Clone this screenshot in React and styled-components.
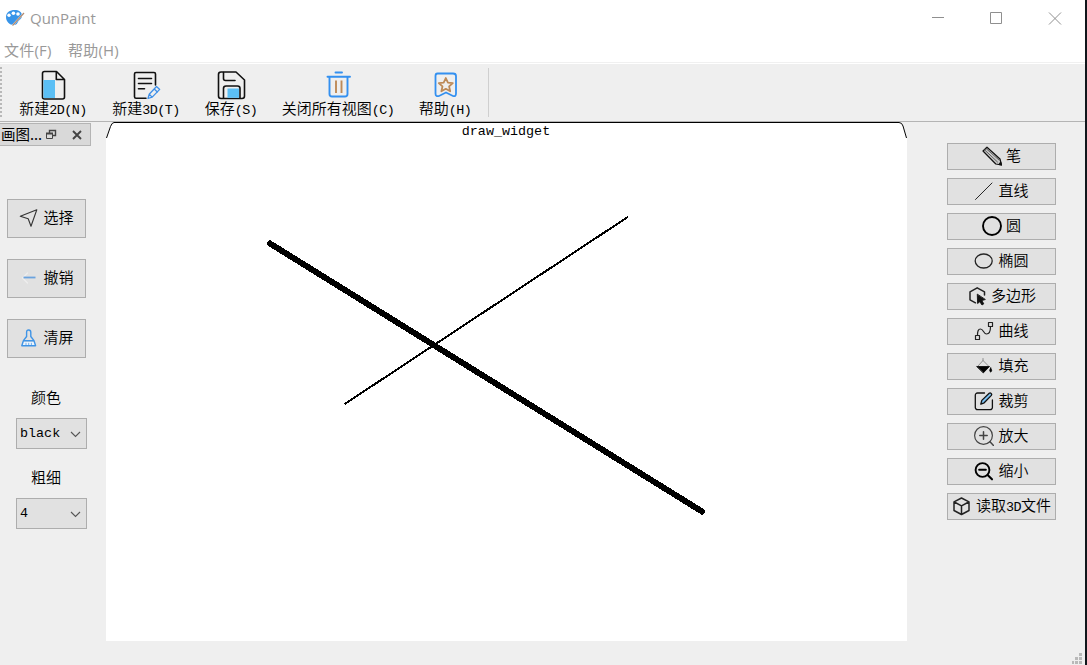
import React from 'react';
import styled, { createGlobalStyle } from 'styled-components';

const Global = createGlobalStyle`
  * { box-sizing: border-box; }
  html, body { margin: 0; padding: 0; overflow: hidden; }
`;

const Desktop = styled.div`
  display: flex;
  width: 1087px;
  height: 665px;
  background: #10161b;
  font-family: 'Liberation Mono', 'Noto Sans CJK SC', monospace;
  font-size: 15px;
  font-weight: 350;
  color: #000;
`;

const Window = styled.div`
  position: relative;
  display: flex;
  flex-direction: column;
  width: 1085px;
  height: 665px;
  background: #efefef;
`;

const TitleBar = styled.header`
  display: flex;
  align-items: center;
  height: 37px;
  padding: 0 23px 0 5px;
  background: #fff;
`;

const Title = styled.span`
  flex: 1;
  margin: -2px 0 0 5px;
  font: 15px/20px 'Open Sans', sans-serif;
  color: #999;
`;

const Controls = styled.div`
  display: flex;
  gap: 45px;
`;

const MenuBar = styled.nav`
  display: flex;
  gap: 16px;
  height: 25px;
  padding: 3px 4px 0;
  background: #fff;
`;

const MenuItem = styled.span`
  width: ${(p) => p.$width}px;
  font: 15px/20px 'Open Sans', 'Noto Sans CJK SC', sans-serif;
  letter-spacing: 0.2px;
  color: #999;
  white-space: nowrap;
`;

const ToolBar = styled.div`
  display: flex;
  height: 60px;
  border-top: 1px solid #f0f0f0;
  border-bottom: 1px solid #b4b4b4;
  box-shadow: inset 0 1px #fff;
`;

const Handle = styled.div`
  width: 2px;
  height: 50px;
  margin: 4px 4px 0 0;
  background: repeating-linear-gradient(#b8b8b8 0 2px, #efefef 2px 4px);
`;

const ToolItem = styled.div`
  display: flex;
  flex-direction: column;
  align-items: center;
  width: ${(p) => p.$width}px;
  padding: 6px 0 0 1px;
`;

const ToolLabel = styled.div`
  height: 20px;
  line-height: 20px;
  white-space: nowrap;
`;

const Separator = styled.div`
  width: 1px;
  height: 49px;
  margin: 5px 0 0 5px;
  background: #cfcfcf;
`;

const Latin = styled.span`
  font-size: 13.4px;
  letter-spacing: ${(p) => p.$tracking ?? -0.5}px;
`;

const Body = styled.main`
  display: flex;
  flex: 1;
`;

const Dock = styled.aside`
  display: flex;
  flex-direction: column;
  width: 106px;
  padding-top: 1px;
`;

const DockTitle = styled.div`
  display: flex;
  align-items: center;
  width: 91px;
  height: 23px;
  padding-left: 1px;
  border: 1px solid #b4b4b4;
  border-left: 0;
  background: #d9d9d9;
  font: 14.5px/20px 'Noto Sans CJK SC', sans-serif;
`;

const DockName = styled.span`
  width: 44px;
  margin-top: -1px;
  white-space: nowrap;
`;

const ActionList = styled.div`
  display: flex;
  flex-direction: column;
  gap: 21px;
  margin: 53px 0 0 7px;
`;

const Button = styled.button`
  display: flex;
  align-items: center;
  justify-content: center;
  gap: 4px;
  width: ${(p) => p.$width}px;
  height: ${(p) => p.$height}px;
  padding: 0;
  border: 1px solid #adadad;
  background: #e1e1e1;
  color: #000;
  font: inherit;
  line-height: 20px;
  white-space: nowrap;

  svg { flex: none; margin-bottom: 1px; }
  span { margin-top: 2px; }
`;

const Field = styled.label`
  display: flex;
  flex-direction: column;
  gap: 8px;
  margin: ${(p) => p.$top}px 0 0 16px;
  line-height: 20px;
`;

const FieldName = styled.span`
  padding-left: 15px;
`;

const Combo = styled.div`
  display: flex;
  align-items: center;
  justify-content: space-between;
  width: 71px;
  height: 31px;
  padding: 1px 5px 0 3px;
  border: 1px solid #adadad;
  background: #e1e1e1;
`;

const Canvas = styled.section`
  position: relative;
  width: 801px;
  height: 519px;
  background: #fff;
`;

const Drawing = styled.svg`
  display: block;
`;

const CanvasTitle = styled.div`
  position: absolute;
  top: 0;
  left: 0;
  width: 800px;
  line-height: 20px;
  text-align: center;
`;

const Palette = styled.aside`
  display: flex;
  flex-direction: column;
  gap: 8px;
  padding: 21px 0 0 40px;
`;

const Grip = styled.svg`
  position: absolute;
  right: 3px;
  bottom: 1px;
`;

function Mixed({ children }) {
  return children
    .split(/([\x20-\x7e]+)/)
    .filter(Boolean)
    .map((s, i) => (/^[\x20-\x7e]/.test(s) ? <Latin key={i}>{s}</Latin> : <React.Fragment key={i}>{s}</React.Fragment>));
}

const Icon = ({ size = 20, box = 20, stroke = '#111', sw = 1.3, children }) => (
  <svg width={size} height={size} viewBox={`0 0 ${box} ${box}`} fill="none" stroke={stroke} strokeWidth={sw} strokeLinecap="round" strokeLinejoin="round">
    {children}
  </svg>
);

const Logo = () => (
  <svg width="20" height="20" viewBox="0 0 20 20">
    <path d="M1 8C1 3.500 5 1 9.500 1s7.500 2 7.500 5.500c0 3-1.500 3.500-3 5s-1.500 4.500-5 4.500C4.500 16 1 12.500 1 8z" fill="#3894e8" />
    <circle cx="4" cy="6.300" r="1.700" fill="#fff" />
    <circle cx="8.400" cy="4.300" r="1.800" fill="#fff" />
    <circle cx="13" cy="5" r="1.800" fill="#fff" />
    <path d="M19 4 7.500 16.500" stroke="#fff" strokeWidth="1.800" />
    <path d="M19 4 7.500 16.500" stroke="#b08a70" strokeWidth="1.200" />
  </svg>
);

const tools = [
  { label: '新建2D(N)', width: 93, icon: (
    <Icon size={32} box={32} sw={1.6}>
      <path d="M7.500 2.500h12l8 8V28a2 2 0 0 1-2 2h-18a2 2 0 0 1-2-2V4.500a2 2 0 0 1 2-2zM19.300 3v7.500h8" />
      <path d="M6.500 11h11.500v18H6.500z" fill="#5bbff5" stroke="none" />
    </Icon>
  ) },
  { label: '新建3D(T)', width: 93, icon: (
    <Icon size={32} box={32} sw={1.6}>
      <path d="M16 29.300H6a1.500 1.500 0 0 1-1.500-1.500V5A1.500 1.500 0 0 1 6 3.500h18A1.500 1.500 0 0 1 25.500 5v11" />
      <path d="M8.500 9.500h13M8.500 14.500h13M8.500 19.700h6" />
      <path d="m18 29.500 1.200-4.300 7.300-7.700 3.200 2.900-7.500 7.700zM24.200 20l3.200 3M19.200 25.200l3 2.900" stroke="#3d8fe8" strokeWidth="1.300" />
    </Icon>
  ) },
  { label: '保存(S)', width: 77, icon: (
    <Icon size={32} box={32} sw={1.6}>
      <path d="M6.500 3H21l8.500 8V27a2.500 2.500 0 0 1-2.500 2.500H6A2.500 2.500 0 0 1 3.500 27V5.500A2.500 2.500 0 0 1 6 3z" />
      <path d="M8.500 3.500v6q0 2 2 2H20M8.500 29V19.500q0-2.500 2.500-2.500h11.500q2.500 0 2.500 2.500v9.500" />
      <path d="M12.500 19.500h11.500V28.800H12.500z" fill="#5bbff5" stroke="none" />
    </Icon>
  ) },
  { label: '关闭所有视图(C)', width: 137, icon: (
    <Icon size={32} box={32} stroke="#3390f0" sw={1.9}>
      <path d="M13.500 3.500H20M5.500 7.800H28M7.500 8v17q0 2.500 2.500 2.500h13q2.500 0 2.500-2.500V8" />
      <path d="M14 11.500v12.500M19.500 11.500v12.500" stroke="#bd8a58" strokeLinecap="butt" />
    </Icon>
  ) },
  { label: '帮助(H)', width: 77, icon: (
    <Icon size={32} box={32} stroke="#3390f0" sw={1.8}>
      <path d="M8.500 4.500h15.500Q27 4.500 27 7v17.500q0 3.500-3 2.500l-7-3.500-7 3.500q-3.500 1-3.500-2.500V7q0-2.500 2-2.500z" />
      <path d="m16.800 9 2.100 4.600 4.900.5-3.700 3.300 1.100 4.900-4.400-2.500-4.400 2.500 1.100-4.900-3.700-3.300 4.900-.5z" stroke="#bd8a58" strokeWidth="1.800" />
    </Icon>
  ) },
];

const actions = [
  { label: '选择', icon: <Icon sw={1.1} stroke="#333"><path d="M1.300 8.300 17.800 1.800 12 18.300 9.200 10.800z" /></Icon> },
  { label: '撤销', icon: (
    <Icon><path d="M8.500 5 3.500 10l5 5" stroke="#eeeeee" /><path d="M4.500 9.500h12" stroke="#6aa3de" strokeWidth="1.800" strokeLinecap="butt" /></Icon>
  ) },
  { label: '清屏', icon: (
    <Icon stroke="#3f94e6" sw={1.4}>
      <path d="M4 14h11.500l1 3.500H3z" fill="#eef5fc" stroke="none" />
      <path d="M7.600 8.500V4.500Q7.600 2 9.700 2t2.100 2.500v4l3.200 4.200 1.600 5H2.800l1.600-5zM5 12.700h9.500" />
      <path d="M7 15.200v1.500M9.700 15.200v1.500M12.400 15.200v1.500" strokeWidth=".7" />
    </Icon>
  ) },
];

const shapes = [
  { label: '笔', icon: (
    <Icon sw={1.2}>
      <path d="M1 5 5 1.200 18 13 19.500 19 13.800 18z" fill="#c9c9c9" />
      <path d="M2.500 3.800 15.500 16M4 2.500 17 14" strokeWidth=".8" stroke="#444" />
      <path d="m17 18.500 2.500.5-.8-2.900z" fill="#111" />
    </Icon>
  ) },
  { label: '直线', icon: <Icon sw={0.9}><path d="M1.500 18.500 18 2" /></Icon> },
  { label: '圆', icon: <Icon sw={1.9} stroke="#000"><circle cx="10" cy="10" r="9" /></Icon> },
  { label: '椭圆', icon: <Icon sw={1.3} stroke="#222"><ellipse cx="9.700" cy="10" rx="8.500" ry="7" /></Icon> },
  { label: '多边形', icon: (
    <Icon sw={1.5} stroke="#222">
      <path d="M8.500 16.800 3 13.800V5.800L10.200 1.800 17.500 5.800V9" />
      <path d="m10.300 8.500.3 9 2.200-1.800 2.200 3.300 1.800-1.200-2-3.200 3.200-1z" fill="#111" stroke="#111" strokeWidth=".9" />
    </Icon>
  ) },
  { label: '曲线', icon: (
    <Icon sw={1.2} stroke="#222">
      <path d="M1.500 14.500h4v4h-4zM14.500 1.500h4v4h-4zM3.500 14.500c0-4 .5-6.500 3-6.500 3 0 3 5 6 5 2.800 0 4-3 4-7.500" />
    </Icon>
  ) },
  { label: '填充', icon: (
    <Icon sw={0.8} stroke="#777">
      <path d="M9 2.500v2M4 10 9 4.500l5.500 5.500" />
      <path d="M3 10.500h12.500l-6 6.200z" fill="#000" stroke="#000" />
      <path d="M16.700 12q2 3 0 4-2-1 0-4z" fill="#000" stroke="#000" />
    </Icon>
  ) },
  { label: '裁剪', icon: (
    <Icon sw={1.3}>
      <path d="M10.500 2H3.500A2.200 2.200 0 0 0 1.300 4.200v12.300a2.200 2.200 0 0 0 2.200 2.200h12.700a2.200 2.200 0 0 0 2.200-2.200V9" />
      <path d="m6.800 13.200 1-3.800 7.400-7.200q1-.7 2 .2t.2 2l-7.200 7.400z" fill="#7bc0f2" />
    </Icon>
  ) },
  { label: '放大', icon: (
    <Icon sw={1.2} stroke="#444"><circle cx="9.500" cy="9.500" r="8.900" /><path d="M5.800 9.500h7.400M9.500 5.800v7.400" strokeWidth="1.500" /><path d="m16 15.800 3.500 3.700" strokeWidth="1.500" /></Icon>
  ) },
  { label: '缩小', icon: (
    <Icon sw={1.9} stroke="#000"><circle cx="8.500" cy="9" r="6.900" /><path d="M5.200 8.700h6.600M13.600 14l4.400 4.300" strokeWidth="2.100" /></Icon>
  ) },
  { label: '读取3D文件', icon: (
    <Icon sw={1.5} stroke="#222"><path d="M9.500 2 17 5.800v8.700L9.500 18.500 2 14.500V5.800zM2.300 6l7.200 3.900L16.700 6M9.500 10v8" /></Icon>
  ) },
];

const Chevron = () => (
  <svg width="11" height="7" viewBox="0 0 11 7"><path d="m1 1 4.500 4.500L10 1" fill="none" stroke="#555" strokeWidth="1.100" /></svg>
);

export default function App() {
  return (
    <Desktop>
      <Global />
      <Window>
        <TitleBar>
          <Logo />
          <Title>QunPaint</Title>
          <Controls>
            <svg width="13" height="13"><path d="M0 5.500h12" stroke="#8f8f8f" /></svg>
            <svg width="13" height="13"><path d="M.5.500h11v11H.5z" fill="none" stroke="#8f8f8f" /></svg>
            <svg width="14" height="13"><path d="m1 .5 12 12M13 .5l-12 12" stroke="#8f8f8f" /></svg>
          </Controls>
        </TitleBar>
        <MenuBar>
          <MenuItem $width={48}>文件(F)</MenuItem>
          <MenuItem $width={52}>帮助(H)</MenuItem>
        </MenuBar>
        <ToolBar>
          <Handle />
          {tools.map((t) => (
            <ToolItem key={t.label} $width={t.width}>
              {t.icon}
              <ToolLabel><Mixed>{t.label}</Mixed></ToolLabel>
            </ToolItem>
          ))}
          <Separator />
        </ToolBar>
        <Body>
          <Dock>
            <DockTitle>
              <DockName>画图...</DockName>
              <svg width="44" height="14" viewBox="0 0 44 14" fill="none" stroke="#444">
                <path d="M4.500 5V2.500h6v5H8M4 2.500h7" strokeWidth="1.400" />
                <path d="M1.500 5.500h6v5h-6z" />
                <path d="M1 5.500h7" strokeWidth="2" />
                <path d="m28 3 8 8M36 3l-8 8" strokeWidth="1.900" />
              </svg>
            </DockTitle>
            <ActionList>
              {actions.map((a) => (
                <Button key={a.label} $width={79} $height={39}>{a.icon}<span>{a.label}</span></Button>
              ))}
            </ActionList>
            <Field $top={32}>
              <FieldName>颜色</FieldName>
              <Combo><Latin $tracking={0}>black</Latin><Chevron /></Combo>
            </Field>
            <Field $top={21}>
              <FieldName>粗细</FieldName>
              <Combo><Latin $tracking={0}>4</Latin><Chevron /></Combo>
            </Field>
          </Dock>
          <Canvas>
            <Drawing width="801" height="519" viewBox="0 0 801 519">
              <path d="M0 0H7Q5 2 4 5L0 16zM801 0H793Q796 1 797 5L801 16z" fill="#efefef" />
              <path d="M.5 16 4.500 4.500Q6 .5 8 .5H793Q796 .5 797 4L800.500 16" fill="none" stroke="#000" />
              <g stroke="#000" strokeLinecap="square" shapeRendering="crispEdges">
                <path d="M239.500 281.500 521 95.500" strokeWidth="2" />
                <path d="M164 121.500 596 389.500" strokeWidth="6" strokeLinecap="round" />
              </g>
            </Drawing>
            <CanvasTitle><Latin $tracking={0}>draw_widget</Latin></CanvasTitle>
          </Canvas>
          <Palette>
            {shapes.map((s) => (
              <Button key={s.label} $width={109} $height={27}>{s.icon}<span><Mixed>{s.label}</Mixed></span></Button>
            ))}
          </Palette>
        </Body>
        <Grip width="10" height="11" viewBox="0 0 10 11" fill="#b9b9b9">
          <path d="M7 0h3v3H7zM3 4h3v3H3zM7 4h3v3H7zM0 8h2v3H0zM3 8h3v3H3zM7 8h3v3H7z" />
        </Grip>
      </Window>
    </Desktop>
  );
}
